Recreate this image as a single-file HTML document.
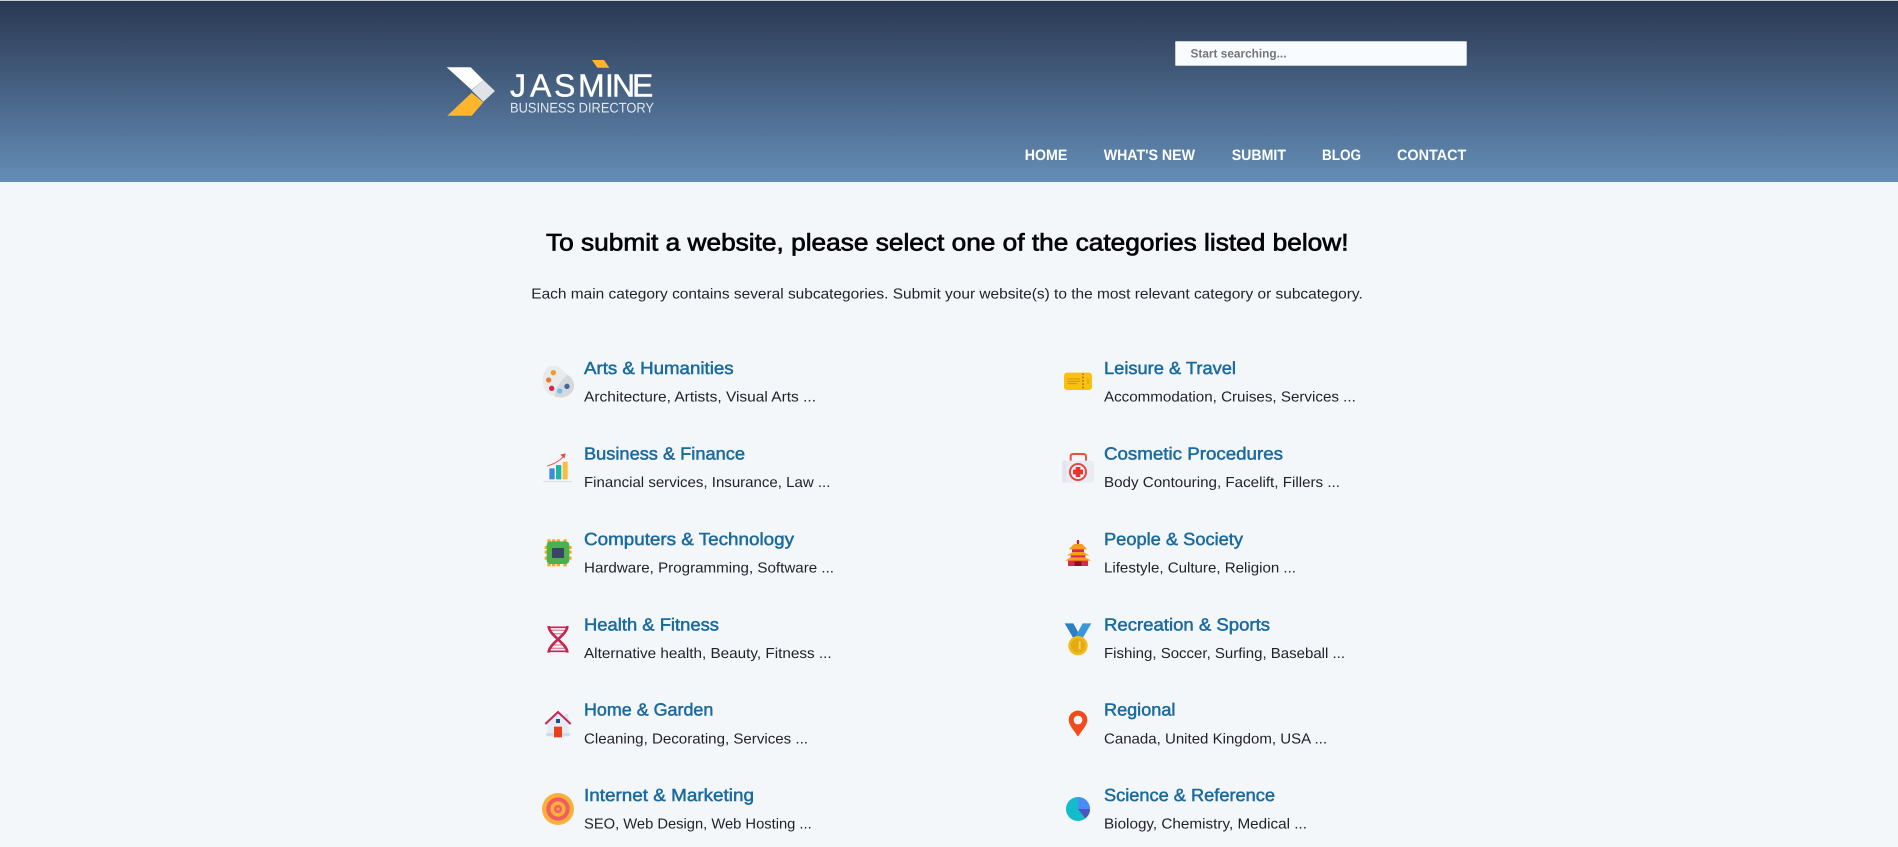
<!DOCTYPE html>
<html lang="en">
<head>
<meta charset="utf-8">
<title>Jasmine Business Directory - Submit</title>
<style>
html,body{margin:0;padding:0;width:1898px;height:847px;overflow:hidden;background:#f4f7fa}
#hdr{position:absolute;left:0;top:0;width:1898px;height:182px;box-sizing:border-box;border-top:1px solid #c9ccd0;background:linear-gradient(to bottom,#2a3852 0%,#648db6 100%)}
#art{position:absolute;left:0;top:0}
text{font-family:"Liberation Sans",Arial,sans-serif;text-rendering:geometricPrecision}
.nav{font-size:15px;font-weight:700;fill:#fff}
.t{font-size:17.5px;fill:#1b6a9f;stroke:#1b6a9f;stroke-width:.5px}
.s{font-size:14.5px;fill:#22222a}
</style>
</head>
<body>
<div id="hdr"></div>
<svg id="art" width="1898" height="847" viewBox="0 0 1898 847" xmlns="http://www.w3.org/2000/svg">
<!-- logo -->
<polygon points="446.7,67.3 470.7,67.3 483.3,80 471.7,90" fill="#fff"/>
<polygon points="483.3,80 495,91 483.3,101.7 471.7,90.5" fill="#dfe3e8"/>
<polygon points="471.7,92.7 483.3,102.3 471.7,115.7 447.3,115.7" fill="#fdb52e"/>
<polygon points="592,60 604,60 609.3,67.7 597.3,67.7" fill="#fdb52e"/>
<text y="96.7" font-size="32" fill="#fff" stroke="#fff" stroke-width=".4" x="510 530 554 578 605 612 632">JASMINE</text>
<text x="510" y="112.7" font-size="14" fill="#e3e8ef" textLength="144" lengthAdjust="spacingAndGlyphs">BUSINESS DIRECTORY</text>
<!-- search -->
<rect x="1175.5" y="41.5" width="291" height="24" rx="1" fill="#f8fbff" stroke="#c8ccd2"/>
<text x="1190.5" y="57.3" font-size="12" font-weight="700" fill="#757575" textLength="96" lengthAdjust="spacingAndGlyphs">Start searching...</text>
<!-- nav -->
<text class="nav" x="1024.7" y="160" textLength="42.6" lengthAdjust="spacingAndGlyphs">HOME</text>
<text class="nav" x="1103.7" y="160" textLength="91.3" lengthAdjust="spacingAndGlyphs">WHAT'S NEW</text>
<text class="nav" x="1231.7" y="160" textLength="54.3" lengthAdjust="spacingAndGlyphs">SUBMIT</text>
<text class="nav" x="1322" y="160" textLength="39" lengthAdjust="spacingAndGlyphs">BLOG</text>
<text class="nav" x="1397" y="160" textLength="69.3" lengthAdjust="spacingAndGlyphs">CONTACT</text>
<!-- heading -->
<text x="546" y="250.7" font-size="24" fill="#050508" stroke="#050508" stroke-width=".7" textLength="802.5" lengthAdjust="spacingAndGlyphs">To submit a website, please select one of the categories listed below!</text>
<text x="531.3" y="298.3" font-size="14.5" fill="#22222a" textLength="831.5" lengthAdjust="spacingAndGlyphs">Each main category contains several subcategories. Submit your website(s) to the most relevant category or subcategory.</text>
<!-- left column -->
<text class="t" x="584" y="374" textLength="149.6" lengthAdjust="spacingAndGlyphs">Arts &amp; Humanities</text>
<text class="s" x="584" y="401.7" textLength="232" lengthAdjust="spacingAndGlyphs">Architecture, Artists, Visual Arts ...</text>
<text class="t" x="584" y="459.4" textLength="161" lengthAdjust="spacingAndGlyphs">Business &amp; Finance</text>
<text class="s" x="584" y="487.1" textLength="246.4" lengthAdjust="spacingAndGlyphs">Financial services, Insurance, Law ...</text>
<text class="t" x="584" y="544.8" textLength="210" lengthAdjust="spacingAndGlyphs">Computers &amp; Technology</text>
<text class="s" x="584" y="572.5" textLength="250" lengthAdjust="spacingAndGlyphs">Hardware, Programming, Software ...</text>
<text class="t" x="584" y="630.6" textLength="135" lengthAdjust="spacingAndGlyphs">Health &amp; Fitness</text>
<text class="s" x="584" y="657.9" textLength="247.6" lengthAdjust="spacingAndGlyphs">Alternative health, Beauty, Fitness ...</text>
<text class="t" x="584" y="715.6" textLength="129.3" lengthAdjust="spacingAndGlyphs">Home &amp; Garden</text>
<text class="s" x="584" y="743.3" textLength="224" lengthAdjust="spacingAndGlyphs">Cleaning, Decorating, Services ...</text>
<text class="t" x="584" y="801" textLength="170" lengthAdjust="spacingAndGlyphs">Internet &amp; Marketing</text>
<text class="s" x="584" y="828.7" textLength="227.7" lengthAdjust="spacingAndGlyphs">SEO, Web Design, Web Hosting ...</text>
<!-- right column -->
<text class="t" x="1104" y="374" textLength="132" lengthAdjust="spacingAndGlyphs">Leisure &amp; Travel</text>
<text class="s" x="1104" y="401.7" textLength="251.8" lengthAdjust="spacingAndGlyphs">Accommodation, Cruises, Services ...</text>
<text class="t" x="1104" y="459.4" textLength="179" lengthAdjust="spacingAndGlyphs">Cosmetic Procedures</text>
<text class="s" x="1104" y="487.1" textLength="236" lengthAdjust="spacingAndGlyphs">Body Contouring, Facelift, Fillers ...</text>
<text class="t" x="1104" y="544.8" textLength="139" lengthAdjust="spacingAndGlyphs">People &amp; Society</text>
<text class="s" x="1104" y="572.5" textLength="192" lengthAdjust="spacingAndGlyphs">Lifestyle, Culture, Religion ...</text>
<text class="t" x="1104" y="630.6" textLength="166" lengthAdjust="spacingAndGlyphs">Recreation &amp; Sports</text>
<text class="s" x="1104" y="657.9" textLength="241" lengthAdjust="spacingAndGlyphs">Fishing, Soccer, Surfing, Baseball ...</text>
<text class="t" x="1104" y="715.6" textLength="71.4" lengthAdjust="spacingAndGlyphs">Regional</text>
<text class="s" x="1104" y="743.3" textLength="223" lengthAdjust="spacingAndGlyphs">Canada, United Kingdom, USA ...</text>
<text class="t" x="1104" y="801" textLength="171" lengthAdjust="spacingAndGlyphs">Science &amp; Reference</text>
<text class="s" x="1104" y="828.7" textLength="203" lengthAdjust="spacingAndGlyphs">Biology, Chemistry, Medical ...</text>
<!-- left icons 1-2 -->
<g transform="translate(530,350) scale(.33333)">
<path d="M38,90C38,62 52,47 72,48C90,49 98,62 112,74C128,84 136,100 130,118C122,140 95,146 75,140C50,134 38,115 38,90Z" fill="#e9eaed"/>
<path d="M112,74C128,84 136,100 130,118C122,140 95,146 75,140C72,130 80,105 112,74Z" fill="#d6d8dc"/>
<circle cx="70" cy="68" r="8" fill="#f39a1f"/><circle cx="56" cy="90" r="8" fill="#e58030"/><circle cx="65" cy="115" r="8" fill="#d9243f"/><circle cx="89" cy="123" r="8" fill="#6cc0f5"/><circle cx="111" cy="109" r="8" fill="#44689b"/>
<line x1="40" y1="395" x2="126" y2="395" stroke="#d8dde3" stroke-width="3"/>
<rect x="58" y="355" width="16" height="33" rx="2" fill="#3f8ae0"/><rect x="78" y="345" width="16" height="43" rx="2" fill="#22b5a5"/><rect x="98" y="335" width="15" height="53" rx="2" fill="#fbbc3d"/>
<path d="M52,348C72,342 88,333 100,320" fill="none" stroke="#e8474f" stroke-width="3"/><polygon points="107,310 91,314 103,326" fill="#e8474f"/>
</g>
<!-- left icons 3-4 -->
<g transform="translate(530,520) scale(.33333)">
<g fill="#f9a825"><rect x="52" y="58" width="10" height="10"/><rect x="66" y="58" width="10" height="10"/><rect x="80" y="58" width="10" height="10"/><rect x="100" y="58" width="10" height="10"/><rect x="52" y="129" width="10" height="10"/><rect x="66" y="129" width="10" height="10"/><rect x="80" y="129" width="10" height="10"/><rect x="100" y="129" width="10" height="10"/><rect x="44" y="78" width="10" height="9"/><rect x="44" y="92" width="10" height="9"/><rect x="44" y="110" width="10" height="9"/><rect x="115" y="78" width="10" height="9"/><rect x="115" y="92" width="10" height="9"/><rect x="115" y="110" width="10" height="9"/></g>
<rect x="50" y="64" width="68" height="68" rx="11" fill="#4caf50"/><rect x="66" y="84" width="36" height="30" rx="3" fill="#3a4560"/>
<g stroke="#e08aa0" stroke-width="4"><line x1="60" y1="331" x2="108" y2="331"/><line x1="66" y1="341" x2="102" y2="341"/><line x1="66" y1="375" x2="102" y2="375"/><line x1="60" y1="385" x2="108" y2="385"/></g>
<g stroke="#c2274f" fill="none" stroke-width="8"><path d="M56,318C56,346 112,370 112,398"/><path d="M112,318C112,346 56,370 56,398"/><line x1="54" y1="322" x2="114" y2="322" stroke-width="5"/><line x1="54" y1="394" x2="114" y2="394" stroke-width="5"/></g>
</g>
<!-- left icons 5-6 -->
<g transform="translate(530,690) scale(.33333)">
<rect x="104" y="72" width="11" height="24" fill="#dce3ef"/>
<polygon points="52,100 84,70 116,100 116,140 52,140" fill="#e8ebf2"/><rect x="48" y="130" width="72" height="7" fill="#c9d6e6"/>
<polyline points="46,102 84,66 122,102" fill="none" stroke="#c7254e" stroke-width="6"/>
<rect x="78" y="87" width="12" height="12" fill="#1a4f9c"/><rect x="72" y="110" width="24" height="32" fill="#e8401c"/>
<circle cx="84" cy="357" r="48" fill="#fbb03b"/><circle cx="84" cy="357" r="35" fill="#ef5d60"/><circle cx="84" cy="357" r="23" fill="#fbb03b"/><circle cx="84" cy="357" r="12" fill="#ef5d60"/><circle cx="84" cy="357" r="5" fill="#f6a04a"/>
</g>
<!-- right icons 1-2 -->
<g transform="translate(1050,350) scale(.33333)">
<rect x="42" y="68" width="84" height="52" rx="9" fill="#fdc010"/>
<line x1="99" y1="70" x2="99" y2="118" stroke="#8a6a1a" stroke-width="4" stroke-dasharray="5 5"/>
<g stroke="#c99a18" stroke-width="3"><line x1="52" y1="87" x2="90" y2="87"/><line x1="52" y1="94" x2="90" y2="94"/><line x1="52" y1="101" x2="82" y2="101"/><line x1="114" y1="86" x2="114" y2="102"/></g>
<path d="M62,336V319Q62,312 69,312H100Q108,312 108,320V336" fill="none" stroke="#f0503c" stroke-width="6"/>
<rect x="37" y="332" width="95" height="66" rx="8" fill="#e9ecf4"/><rect x="37" y="332" width="12" height="66" rx="6" fill="#e2e5ed"/>
<circle cx="84" cy="366" r="27" fill="#e8463a"/><circle cx="84" cy="366" r="21" fill="#f3f5fb"/>
<path d="M77,351H91V359H99V373H91V381H77V373H69V359H77Z" fill="#e8352e"/>
</g>
<!-- right icons 3-4 -->
<g transform="translate(1050,520) scale(.33333)">
<rect x="81" y="60" width="6" height="14" fill="#c8203f"/><circle cx="84" cy="66" r="4" fill="#c8203f"/>
<rect x="66" y="84" width="36" height="14" fill="#d6294e"/><rect x="62" y="102" width="44" height="14" fill="#d6294e"/><rect x="54" y="120" width="60" height="18" fill="#d6294e"/><rect x="74" y="124" width="20" height="14" fill="#8a1020"/>
<polygon points="56,88 72,72 96,72 112,88" fill="#fb9d1c"/><polygon points="50,106 68,96 100,96 118,106" fill="#fb9d1c"/><polygon points="44,122 62,112 106,112 124,122" fill="#fb9d1c"/>
<polygon points="44,310 70,310 96,358 72,358" fill="#2c7fc0"/><polygon points="124,310 98,310 72,358 96,358" fill="#3a97dc"/>
<circle cx="84" cy="377" r="29" fill="#f2bb1c"/><circle cx="84" cy="377" r="21" fill="#e3aa12"/><rect x="86" y="363" width="6" height="26" fill="#f5d04e"/>
</g>
<!-- right icons 5-6 -->
<g transform="translate(1050,690) scale(.33333)">
<path d="M84,140C70,118 56,105 56,90A28,28 0 1 1 112,90C112,105 98,118 84,140Z" fill="#f4491a"/><circle cx="84" cy="90" r="13" fill="#f4f7fa"/>
<circle cx="84" cy="357" r="36" fill="#14bccb"/>
<path d="M84,357V321A36,36 0 0 1 120,357Z" fill="#4a8cf7"/>
<path d="M84,357H120A36,36 0 0 1 106,385Z" fill="#4a55c0"/>
</g>
</svg>
</body>
</html>
